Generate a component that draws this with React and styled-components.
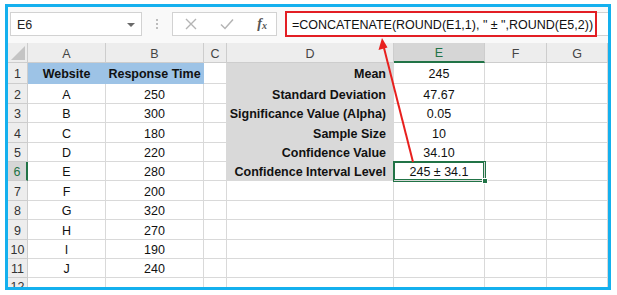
import React from 'react';
import styled, { createGlobalStyle, css } from 'styled-components';

const GlobalStyle = createGlobalStyle`
  html, body {
    margin: 0;
    padding: 0;
    background: #ffffff;
  }
  body {
    font-family: "Liberation Sans", Arial, sans-serif;
  }
`;

const GREEN = '#217346';
const GRID = '#d9d9d9';

const columns = [
    { key: 'A', width: 78 },
    { key: 'B', width: 98 },
    { key: 'C', width: 23 },
    { key: 'D', width: 167 },
    { key: 'E', width: 91 },
    { key: 'F', width: 62 },
    { key: 'G', width: '1fr' },
];

const rowHeights = [21, 20, 19, 20, 19, 19, 20, 19, 20, 19, 19];

const websites = [
    ['A', '250'], ['B', '300'], ['C', '180'], ['D', '220'], ['E', '280'],
    ['F', '200'], ['G', '320'], ['H', '270'], ['I', '190'], ['J', '240'],
];

const stats = [
    ['Mean', '245'],
    ['Standard Deviation', '47.67'],
    ['Significance Value (Alpha)', '0.05'],
    ['Sample Size', '10'],
    ['Confidence Value', '34.10'],
    ['Confidence Interval Level', '245 ± 34.1'],
];

const App = () => {
    const rows = [];
    for (let r = 1; r <= 12; r++) {
        const data = r === 1 ? ['Website', 'Response Time'] : websites[r - 2] || ['', ''];
        const stat = stats[r - 1];
        rows.push(
            <React.Fragment key={r}>
                <RowHead $active={r === 6}>{r}</RowHead>
                <Cell $fill={r === 1 ? 'blue' : null} $bold={r === 1}>{data[0]}</Cell>
                <Cell $fill={r === 1 ? 'blue' : null} $bold={r === 1}>{data[1]}</Cell>
                <Cell />
                <Cell $fill={stat ? 'grey' : null} $bold $align="right">{stat ? stat[0] : ''}</Cell>
                <Cell $selected={r === 6}>{stat ? stat[1] : ''}</Cell>
                <Cell />
                <Cell />
            </React.Fragment>
        );
    }

    return (
        <Page>
            <GlobalStyle />
            <Frame>
                <Toolbar>
                    <NameBox>
                        E6
                        <DropArrow />
                    </NameBox>
                    <Grip>
                        <i /><i /><i />
                    </Grip>
                    <FxBox>
                        <svg width="12" height="12" viewBox="0 0 12 12">
                            <path d="M1 1 L11 11 M11 1 L1 11" stroke="#b4b4b4" strokeWidth="1.4" fill="none" />
                        </svg>
                        <svg width="14" height="12" viewBox="0 0 14 12">
                            <path d="M1 6.5 L5 10.5 L13 1.5" stroke="#b4b4b4" strokeWidth="1.5" fill="none" />
                        </svg>
                        <FxLabel>f<sub>x</sub></FxLabel>
                    </FxBox>
                    <FormulaBox>
                        <Highlight>=CONCATENATE(ROUND(E1,1), " ± ",ROUND(E5,2))</Highlight>
                    </FormulaBox>
                </Toolbar>
                <Sheet>
                    <Corner>
                        <svg width="14" height="14" viewBox="0 0 14 14">
                            <path d="M14 0 L14 14 L0 14 Z" fill="#c4c4c4" />
                        </svg>
                    </Corner>
                    {columns.map(c => (
                        <ColHead key={c.key} $active={c.key === 'E'}>{c.key}</ColHead>
                    ))}
                    {rows}
                </Sheet>
            </Frame>
            <Arrow width="617" height="295" viewBox="0 0 617 295">
                <line x1="413" y1="162" x2="384" y2="48" stroke="#e8201e" strokeWidth="2" />
                <path d="M382 38 L378.5 50 L387.5 47.5 Z" fill="#e8201e" />
            </Arrow>
        </Page>
    );
};

export default App;

const Page = styled.div`
    position: relative;
    width: 617px;
    height: 295px;
    overflow: hidden;
`;

const Frame = styled.div`
    margin: 4px 0 0 5px;
    width: 606px;
    height: 286px;
    box-sizing: border-box;
    border: 3px solid #14b0ee;
    display: flex;
    flex-direction: column;
    overflow: hidden;
    background: #ffffff;
`;

const Toolbar = styled.div`
    height: 36px;
    flex: none;
    display: flex;
    align-items: flex-start;
    padding: 5px 0 0 2px;
    box-sizing: border-box;
    background: #f9f9f9;
`;

const NameBox = styled.div`
    width: 132px;
    height: 24px;
    box-sizing: border-box;
    border: 1px solid #d2d2d2;
    background: #ffffff;
    display: flex;
    align-items: center;
    justify-content: space-between;
    padding: 1px 6px 0 6px;
    font-size: 12.5px;
    color: #222;
`;

const DropArrow = styled.span`
    width: 0;
    height: 0;
    border-left: 4px solid transparent;
    border-right: 4px solid transparent;
    border-top: 4px solid #6a6a6a;
`;

const Grip = styled.div`
    width: 30px;
    height: 24px;
    display: flex;
    flex-direction: column;
    align-items: center;
    justify-content: center;
    gap: 2px;
    i {
        display: block;
        width: 2px;
        height: 2px;
        background: #bdbdbd;
    }
`;

const FxBox = styled.div`
    width: 105px;
    height: 24px;
    box-sizing: border-box;
    border: 1px solid #d2d2d2;
    background: #ffffff;
    display: flex;
    align-items: center;
    justify-content: space-between;
    padding: 0 9px 0 12px;
    margin-right: 8px;
`;

const FxLabel = styled.span`
    font-family: "Liberation Serif", "Times New Roman", serif;
    font-style: italic;
    font-weight: bold;
    font-size: 14px;
    color: #555;
    sub {
        font-size: 10px;
        vertical-align: -1px;
    }
`;

const FormulaBox = styled.div`
    flex: 1;
    height: 24px;
    box-sizing: border-box;
    background: #ffffff;
    border-top: 1px solid #d2d2d2;
    border-bottom: 1px solid #d2d2d2;
`;

const Highlight = styled.div`
    width: 312px;
    height: 26px;
    margin: -2px 0 0 0;
    box-sizing: border-box;
    border: 2px solid #e31e24;
    display: flex;
    align-items: center;
    padding: 1px 0 0 5px;
    font-size: 12.5px;
    color: #111;
    white-space: nowrap;
`;

const Sheet = styled.div`
    flex: 1;
    display: grid;
    grid-template-columns: 20px ${columns.map(c => (typeof c.width === 'number' ? `${c.width}px` : c.width)).join(' ')};
    grid-template-rows: 20px ${rowHeights.map(h => `${h}px`).join(' ')} 1fr;
    font-size: 12.5px;
    color: #111;
    background: #ffffff;
`;

const headBase = css`
    box-sizing: border-box;
    background: #ededed;
    color: #444;
    display: flex;
    align-items: center;
    justify-content: center;
    padding-top: 2px;
    border-right: 1px solid #cdcdcd;
    border-bottom: 1px solid #cdcdcd;
`;

const Corner = styled.div`
    ${headBase};
    align-items: flex-end;
    justify-content: flex-end;
    padding: 0 2px 2px 0;
`;

const ColHead = styled.div`
    ${headBase};
    ${p => p.$active && css`
        background: #d6d6d6;
        color: ${GREEN};
        border-bottom: 2px solid ${GREEN};
    `}
`;

const RowHead = styled.div`
    ${headBase};
    color: #333;
    ${p => p.$active && css`
        background: #d6d6d6;
        color: ${GREEN};
        border-right: 2px solid ${GREEN};
    `}
`;

const fills = {
    blue: '#9dc3e6',
    grey: '#d9d9d9',
};

const Cell = styled.div`
    position: relative;
    box-sizing: border-box;
    display: flex;
    align-items: center;
    justify-content: ${p => (p.$align === 'right' ? 'flex-end' : 'center')};
    padding: 2px 7px 0 7px;
    white-space: nowrap;
    font-weight: ${p => (p.$bold ? 'bold' : 'normal')};
    background: ${p => (p.$fill ? fills[p.$fill] : '#ffffff')};
    border-right: 1px solid ${p => (p.$fill ? fills[p.$fill] : GRID)};
    border-bottom: 1px solid ${p => (p.$fill ? fills[p.$fill] : GRID)};
    ${p => p.$selected && css`
        box-shadow: 0 0 0 1px ${GREEN}, inset 0 0 0 1px ${GREEN};
        z-index: 1;
        &::after {
            content: '';
            position: absolute;
            right: -4px;
            bottom: -4px;
            width: 6px;
            height: 6px;
            background: ${GREEN};
            border: 1px solid #ffffff;
            box-sizing: border-box;
        }
    `}
`;

const Arrow = styled.svg`
    position: absolute;
    left: 0;
    top: 0;
    pointer-events: none;
    z-index: 2;
`;
